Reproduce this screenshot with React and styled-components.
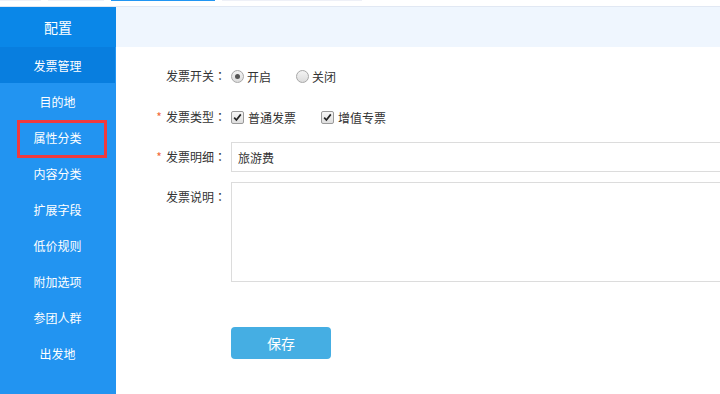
import React from "react";
import styled, { createGlobalStyle } from "styled-components";

const GlobalStyle = createGlobalStyle`
  html, body {
    margin: 0;
    padding: 0;
    overflow: hidden;
    background: #fff;
    font-family: "Noto Sans CJK SC", "Liberation Sans", sans-serif;
  }
`;

const menu = ["发票管理", "目的地", "属性分类", "内容分类", "扩展字段", "低价规则", "附加选项", "参团人群", "出发地"];
const tabs = [{ w: 41 }, { w: 56 }, { w: 104, active: true }, { w: 140 }];

const Page = styled.div`
  width: 720px;
  height: 394px;
  display: flex;
  flex-direction: column;
  overflow: hidden;
`;

const TabStrip = styled.div`
  height: 6px;
  display: flex;
  gap: 7px;
  border-bottom: 1px solid #e1e8f3;
  flex-shrink: 0;
`;

const Tab = styled.div`
  width: ${p => p.w}px;
  height: 1px;
  background: ${p => (p.active ? "#2196f3" : "#eef0f7")};
`;

const Body = styled.div`
  flex: 1;
  display: flex;
`;

const Sidebar = styled.div`
  width: 116px;
  flex-shrink: 0;
  background: #2294f1;
  display: flex;
  flex-direction: column;
`;

const SideHead = styled.div`
  height: 40px;
  display: flex;
  align-items: center;
  justify-content: center;
  background: #0a87e8;
  color: #fff;
  font-size: 14px;
`;

const SideItem = styled.div`
  position: relative;
  height: 36px;
  width: 115px;
  display: flex;
  align-items: center;
  justify-content: center;
  color: #fff;
  font-size: 12px;
  background: ${p => (p.active ? "#087edf" : "transparent")};
`;

const Mark = styled.div`
  position: absolute;
  left: 17px;
  top: 1px;
  width: 90px;
  height: 38px;
  box-sizing: border-box;
  border: 3px solid #ef3a3d;
`;

const Main = styled.div`
  flex: 1;
  display: flex;
  flex-direction: column;
`;

const TopBand = styled.div`
  height: 40px;
  background: #eff6fe;
`;

const Form = styled.div`
  padding: 14px 0 0 30px;
  display: flex;
  flex-direction: column;
`;

const Row = styled.div`
  display: flex;
  align-items: ${p => (p.top ? "flex-start" : "center")};
  min-height: 30px;
  margin-bottom: ${p => p.mb || 10}px;
`;

const Label = styled.div`
  width: 80px;
  margin-right: 5px;
  text-align: right;
  font-size: 12px;
  color: #333;
  line-height: 30px;
`;

const Colon = styled.span`
  font-family: "Noto Sans CJK TC", "Noto Sans CJK SC", sans-serif;
`;

const Star = styled.span`
  color: #f26b3a;
  font-size: 12px;
  margin-right: 4px;
`;

const Option = styled.label`
  display: flex;
  align-items: center;
  font-size: 12px;
  color: #333;
  margin-right: 25px;
`;

const Radio = styled.span`
  width: 11px;
  height: 11px;
  border-radius: 50%;
  border: 1px solid #a8a8a8;
  background: linear-gradient(#f4f4f4, #dcdcdc);
  margin-right: 3px;
  display: flex;
  align-items: center;
  justify-content: center;
  &::after {
    content: "";
    width: 5px;
    height: 5px;
    border-radius: 50%;
    background: ${p => (p.checked ? "#555" : "transparent")};
  }
`;

const Check = styled.span`
  width: 11px;
  height: 11px;
  border-radius: 2px;
  border: 1px solid #9a9a9a;
  background: linear-gradient(#f6f6f6, #dedede);
  margin-right: 4px;
  display: flex;
  align-items: center;
  justify-content: center;
`;

const Input = styled.div`
  width: 520px;
  height: 30px;
  box-sizing: border-box;
  border: 1px solid #dcdcdc;
  padding-left: 6px;
  display: flex;
  align-items: center;
  font-size: 12px;
  color: #333;
`;

const TextArea = styled.div`
  width: 520px;
  height: 100px;
  box-sizing: border-box;
  border: 1px solid #dcdcdc;
`;

const Button = styled.button`
  margin: 35px 0 0 85px;
  width: 100px;
  height: 32px;
  border: 0;
  border-radius: 4px;
  background: #45aee3;
  color: #fff;
  font-size: 14px;
  font-family: inherit;
`;

const Tick = () => (
  <svg width="9" height="9" viewBox="0 0 9 9">
    <path d="M1.2 4.6 L3.4 7 L7.8 1.4" fill="none" stroke="#222" strokeWidth="1.7" />
  </svg>
);

const FieldLabel = ({ star, children }) => (
  <Label>
    {star && <Star>*</Star>}
    {children}
    <Colon>：</Colon>
  </Label>
);

export default function App() {
  return (
    <Page>
      <GlobalStyle />
      <TabStrip>
        {tabs.map((t, i) => <Tab key={i} w={t.w} active={t.active} />)}
      </TabStrip>
      <Body>
        <Sidebar>
          <SideHead>配置</SideHead>
          {menu.map((m, i) => (
            <SideItem key={m} active={i === 0}>
              {m}
              {i === 2 && <Mark />}
            </SideItem>
          ))}
        </Sidebar>
        <Main>
          <TopBand />
          <Form>
            <Row mb={11}>
              <FieldLabel>发票开关</FieldLabel>
              <Option><Radio checked />开启</Option>
              <Option><Radio />关闭</Option>
            </Row>
            <Row>
              <FieldLabel star>发票类型</FieldLabel>
              <Option><Check><Tick /></Check>普通发票</Option>
              <Option><Check><Tick /></Check>增值专票</Option>
            </Row>
            <Row>
              <FieldLabel star>发票明细</FieldLabel>
              <Input>旅游费</Input>
            </Row>
            <Row top>
              <FieldLabel>发票说明</FieldLabel>
              <TextArea />
            </Row>
            <Button>保存</Button>
          </Form>
        </Main>
      </Body>
    </Page>
  );
}
